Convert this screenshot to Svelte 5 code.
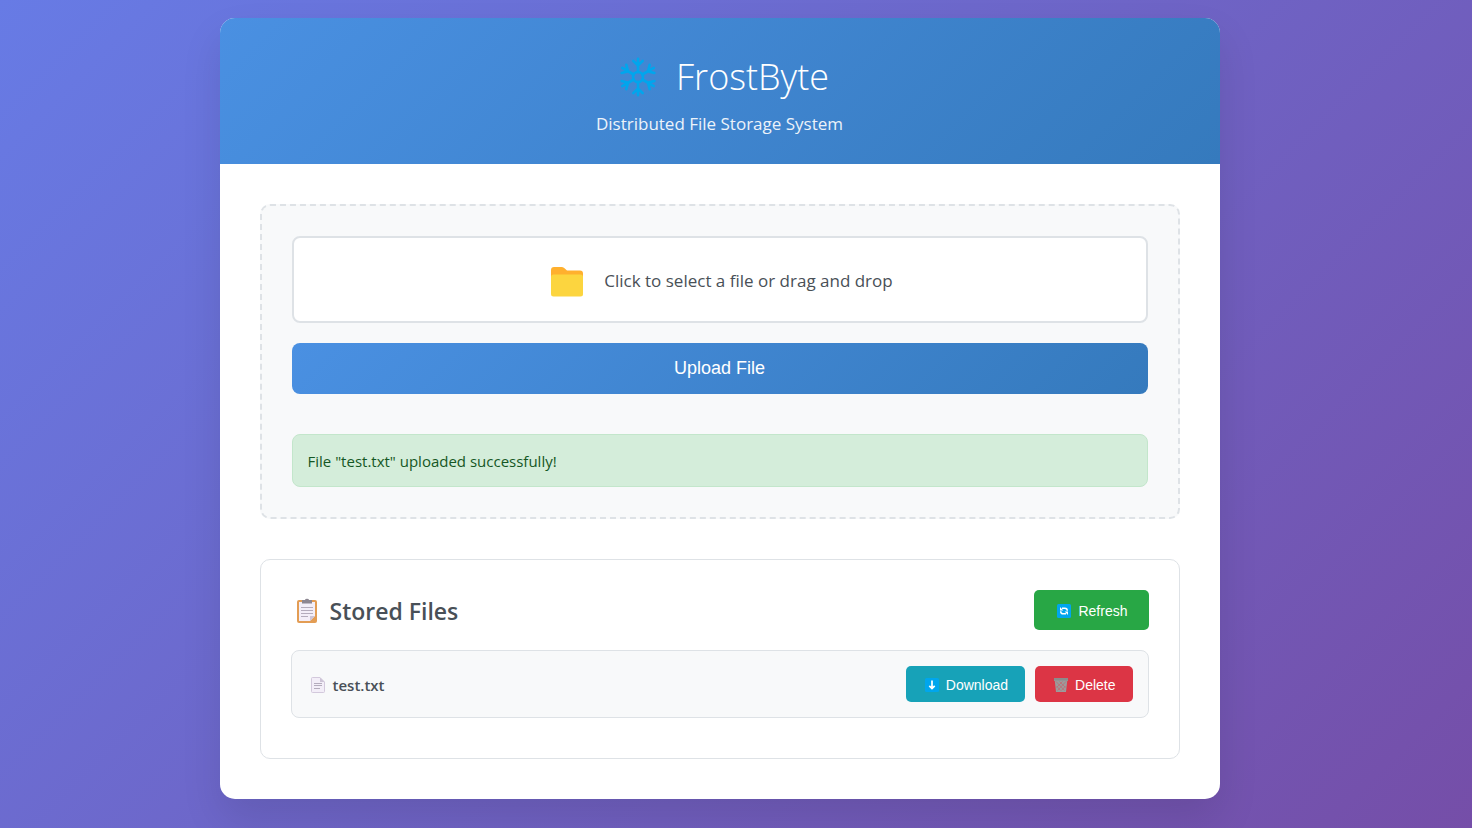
<script>
  let files = $state([{ name: 'test.txt' }]);
  let message = $state('File "test.txt" uploaded successfully!');

  function remove(file) {
    files = files.filter((f) => f !== file);
    message = `File "${file.name}" deleted.`;
  }
</script>

<main class="container">
  <header class="header">
    <h1>
      <svg class="snow" viewBox="0 0 40 40" aria-hidden="true">
        <circle cx="20" cy="20" r="5" />
        {#each [0, 60, 120, 180, 240, 300] as angle}
          <path transform="rotate({angle} 20 20)" d="M20 15V1.800M15.300 3.800l4.700 4.700 4.700-4.700" />
        {/each}
      </svg>
      <span>FrostByte</span>
    </h1>
    <p>Distributed File Storage System</p>
  </header>

  <div class="content">
    <section class="upload">
      <label class="picker" for="file-input">
        <svg class="folder" viewBox="0 0 34 32" aria-hidden="true">
          <path fill="#ffb02e" d="M1 4a3 3 0 0 1 3-3h7.500c1 0 2 .4 2.700 1.100L17 4.500h13a3 3 0 0 1 3 3V16H1z" />
          <rect x="1" y="8.500" width="32" height="22" rx="2.500" fill="#fcd53f" />
        </svg>
        <span>Click to select a file or drag and drop</span>
      </label>
      <input class="file-input" id="file-input" type="file" />
      <button class="upload-btn" type="button">Upload File</button>
      <div class="status" role="status">{message}</div>
    </section>

    <section class="files">
      <div class="files-head">
        <h2>
          <svg class="clipboard" viewBox="0 0 22 26" aria-hidden="true">
            <rect x="1" y="2" width="20" height="23" rx="2" fill="#e39d54" />
            <path fill="#f3eef8" d="M3 4h16v14l-5 5H3z" />
            <path fill="#cdc4d6" d="M14 23v-5h5z" />
            <path fill="#8c8691" d="M6 2h3a2 1.200 0 0 1 4 0h3v3.500H6z" />
            <path stroke="#b4acbc" d="M5 9.500h12M5 12.500h12M5 15.500h12M5 18.500h7" />
          </svg>
          <span>Stored Files</span>
        </h2>
        <button class="btn refresh" type="button">
          <svg viewBox="0 0 14 14" aria-hidden="true">
            <rect width="14" height="14" rx="1.500" fill="#00a6ed" />
            <path fill="none" stroke="#fff" stroke-width="1.500" d="M5 4.200h2.800c1.600 0 2.500 1 2.500 2.600M9 9.800H6.200c-1.600 0-2.500-1-2.500-2.600" />
            <path fill="#fff" d="M3 3v3.400h3.400zM11 11V7.600H7.600z" />
          </svg>
          Refresh
        </button>
      </div>

      <ul>
        {#each files as file}
          <li>
            <span class="name">
              <svg viewBox="0 0 14 16" aria-hidden="true">
                <path fill="#f3eef8" stroke="#d3c9dc" d="M1.500.500H9L13.500 5v9.500a1 1 0 0 1-1 1h-11a1 1 0 0 1-1-1v-13a1 1 0 0 1 1-1z" />
                <path fill="#cdc4d6" d="M9 .500V5h4.500z" />
                <path stroke="#b4acbc" d="M3 6.500h8M3 8.500h8M3 11.500h6" />
              </svg>
              {file.name}
            </span>
            <span class="actions">
              <button class="btn download" type="button">
                <svg viewBox="0 0 14 14" aria-hidden="true">
                  <rect width="14" height="14" rx="1.500" fill="#00a6ed" />
                  <path fill="none" stroke="#fff" stroke-width="1.700" d="M7 2.500v8M4.300 7.800 7 10.500l2.700-2.700" />
                </svg>
                Download
              </button>
              <button class="btn delete" type="button" onclick={() => remove(file)}>
                <svg viewBox="0 0 14 14" aria-hidden="true">
                  <path fill="#9b9b9b" d="M0 0h14v3h-.800L12 14H2L.800 3H0z" />
                  <path fill="none" stroke="#c06a72" stroke-width=".800" d="M2 3.500l8.500 9M5.500 3.500l6 6M2.500 8l4 4.500M12 3.500l-8.500 9M8.500 3.500l-6 6M11.500 8l-4 4.500" />
                  <path fill="#8b8b8b" d="M0 0h14v2.500H0z" />
                </svg>
                Delete
              </button>
            </span>
          </li>
        {/each}
      </ul>
    </section>
  </div>
</main>

<style>
  :global(*) {
    box-sizing: border-box;
  }
  :global(body) {
    margin: 0;
    min-height: 100vh;
    padding: 18px 33px 28px 0;
    background: linear-gradient(135deg, #677be5 0%, #754ea8 100%);
    font-family: 'Segoe UI', 'Open Sans', 'Noto Sans', sans-serif;
    color: #495057;
  }
  .container {
    max-width: 1000px;
    margin: 0 auto;
    background: #fff;
    border-radius: 15px;
    overflow: hidden;
    box-shadow: 0 20px 40px rgba(0, 0, 0, 0.1);
  }
  .header {
    padding: 32px 30px 28px;
    background: linear-gradient(135deg, #4a90e2 0%, #357abd 100%);
    color: #fff;
    text-align: center;
  }
  h1 {
    display: flex;
    align-items: center;
    justify-content: center;
    gap: 18px;
    margin: 0 0 8px;
    padding-left: 8px;
    font-size: 36px;
    line-height: 54px;
    font-weight: 300;
  }
  .snow {
    width: 40px;
    height: 40px;
    fill: none;
    stroke: #00a6ed;
    stroke-width: 2.6;
    stroke-linecap: round;
  }
  .header p {
    margin: 0;
    font-size: 17px;
    line-height: 24px;
    opacity: 0.9;
  }
  .content {
    padding: 40px;
  }
  .upload {
    padding: 30px;
    margin-bottom: 40px;
    border: 2px dashed #dee2e6;
    border-radius: 10px;
    background: #f8f9fa;
  }
  .picker {
    display: flex;
    align-items: center;
    justify-content: center;
    gap: 20px;
    padding: 24px 20px 20px 24px;
    margin-bottom: 20px;
    min-height: 87px;
    border: 2px solid #dee2e6;
    border-radius: 8px;
    background: #fff;
    font-size: 17px;
    line-height: 24px;
    cursor: pointer;
  }
  .picker span {
    padding-bottom: 2px;
  }
  .folder {
    width: 34px;
    height: 32px;
  }
  .file-input {
    display: none;
  }
  button {
    border: 0;
    color: #fff;
    font-family: Arial, 'Liberation Sans', sans-serif;
    cursor: pointer;
  }
  .upload-btn {
    display: block;
    width: 100%;
    padding: 15px;
    border-radius: 8px;
    background: linear-gradient(135deg, #4a90e2 0%, #357abd 100%);
    font-size: 18px;
    line-height: 21px;
  }
  .status {
    margin-top: 40px;
    padding: 16px 15px 14px;
    border: 1px solid #c3e6cb;
    border-radius: 8px;
    background: #d4edda;
    color: #155724;
    font-size: 15px;
    line-height: 21px;
  }
  .files {
    padding: 30px 30px 40px;
    border: 1px solid #dee2e6;
    border-radius: 10px;
  }
  .files-head {
    display: flex;
    align-items: center;
    justify-content: space-between;
    margin-bottom: 20px;
  }
  h2 {
    display: flex;
    align-items: center;
    gap: 12px;
    margin: 0;
    padding: 2px 0 0 5px;
    font-size: 23px;
    line-height: 38px;
    font-weight: 600;
  }
  .clipboard {
    width: 22px;
    height: 26px;
    fill: none;
  }
  .btn {
    display: flex;
    align-items: center;
    gap: 7px;
    border-radius: 5px;
    font-size: 14px;
    line-height: 16px;
  }
  .btn svg {
    width: 14px;
    height: 14px;
  }
  .refresh {
    padding: 13px 21px 11px 23px;
    background: #28a745;
  }
  ul {
    margin: 0;
    padding: 0;
    list-style: none;
  }
  li {
    display: flex;
    align-items: center;
    justify-content: space-between;
    padding: 15px;
    border: 1px solid #dee2e6;
    border-radius: 8px;
    background: #f8f9fa;
  }
  .name {
    display: flex;
    align-items: center;
    gap: 8px;
    padding: 2px 0 0 4px;
    font-size: 15px;
    font-weight: 600;
  }
  .name svg {
    width: 14px;
    height: 16px;
  }
  .actions {
    display: flex;
    gap: 10px;
  }
  .actions .btn {
    padding: 11px 17px 9px 19px;
  }
  .download {
    background: #17a2b8;
  }
  .delete {
    background: #dc3545;
  }
</style>
